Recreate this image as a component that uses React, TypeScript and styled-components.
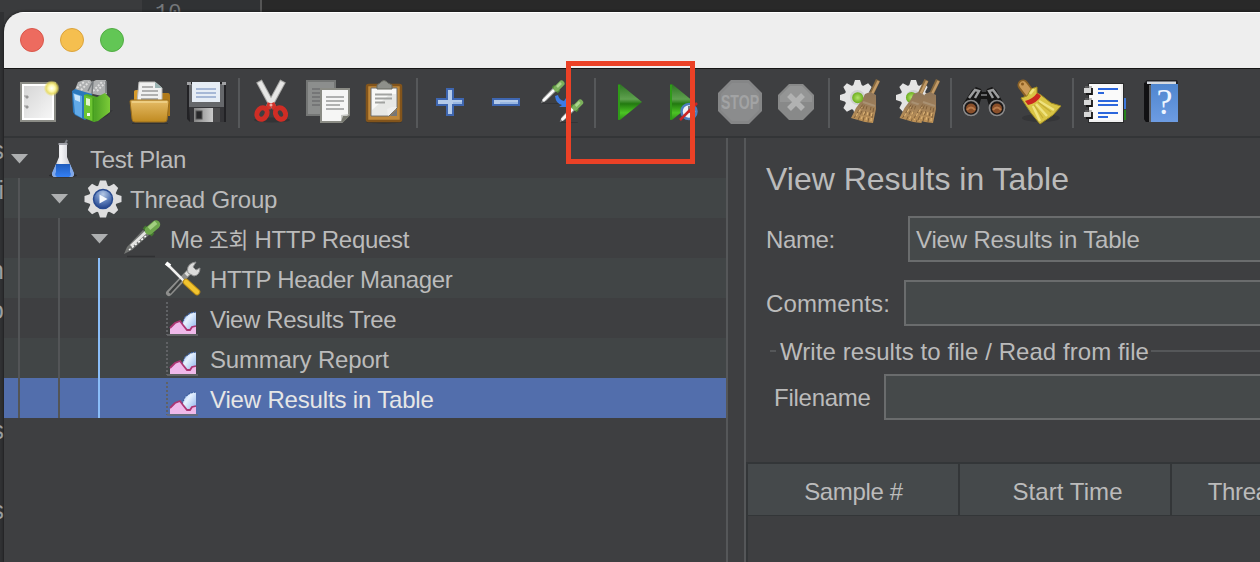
import React from "react";
import styled, { createGlobalStyle } from "styled-components";

const GlobalStyle = createGlobalStyle`
  * { box-sizing: border-box; }
  body {
    margin: 0;
    overflow: hidden;
    background: #2a2a2a;
    font-family: "Liberation Sans", "Noto Sans CJK KR", sans-serif;
    color: #bbbbbb;
  }
  svg { display: block; }
`;

const Desktop = styled.div`
  position: relative;
  display: grid;
  grid-template: 12px 550px / 4px 1256px;
  width: 1260px;
  height: 562px;
  overflow: hidden;
  background: linear-gradient(90deg, #38393b 0, #38393b 142px, #292929 142px);
`;

const EditorStrip = styled.div`
  grid-column: 1 / 3;
  display: flex;
  height: 32px;
  background: #292929;
`;

const EditorPane = styled.div`
  width: 142px;
  background: #3a3b3d;
`;

const EditorGutter = styled.div`
  width: 120px;
  padding: 2px 0 0 13px;
  border-right: 2px solid #555555;
  background: #303234;
  color: #75787b;
  font: 22px/24px "Liberation Mono", monospace;
`;

const EditorEdge = styled.div`
  grid-row: 2;
  display: flex;
  flex-direction: column;
  padding-top: 118px;
  overflow: hidden;
  background: #303133;
`;

const EdgeGlyph = styled.div`
  display: flex;
  justify-content: flex-end;
  flex: 0 0 40px;
  width: 4px;
  color: #a2a3a4;
  font-size: 25px;
  line-height: 40px;
`;

const Window = styled.div`
  grid-row: 2;
  grid-column: 2;
  z-index: 1;
  display: flex;
  flex-direction: column;
  overflow: hidden;
  border-top-left-radius: 20px;
  background: #3e3f41;
  box-shadow: 0 0 3px #111111;
`;

const TitleBar = styled.div`
  display: flex;
  flex: 0 0 57px;
  gap: 16px;
  padding: 15px 16px 16px;
  border-top: 1px solid #ffffff;
  border-bottom: 1px solid #151515;
  background: #eeeeee;
`;

const Light = styled.div<{ $fill: string; $edge: string }>`
  width: 24px;
  height: 24px;
  border: 1px solid ${(p) => p.$edge};
  border-radius: 50%;
  background: ${(p) => p.$fill};
`;

const Toolbar = styled.div`
  display: flex;
  flex: 0 0 69px;
  padding: 9px 6px 0;
  border-bottom: 2px solid #333537;
`;

const ToolButton = styled.div`
  display: flex;
  justify-content: center;
  width: 56px;
`;

const ToolSeparator = styled.div`
  width: 2px;
  height: 50px;
  margin: 0 4px;
  background: #56585a;
`;

const Content = styled.div`
  display: flex;
  flex: 1;
  min-height: 0;
`;

const TreePane = styled.div`
  width: 724px;
  border-right: 2px solid #555759;
`;

const TreeRow = styled.div<{ $tone: string; $selected?: boolean }>`
  display: flex;
  height: 40px;
  background: ${(p) => p.$tone};
  color: ${(p) => (p.$selected ? "#e6e6e6" : "#bbbbbb")};
`;

const Indent = styled.div<{ $active: boolean }>`
  width: 40px;
  padding-left: 14px;
  &::before {
    content: "";
    display: block;
    width: 2px;
    height: 40px;
    background: ${(p) => (p.$active ? "#8abdf8" : "#535557")};
  }
`;

const Toggle = styled.div`
  width: 39px;
  padding: 16px 0 0 7px;
`;

const TreeLabel = styled.div<{ $track: number }>`
  padding: 3px 0 0 7px;
  font-size: 24px;
  line-height: 37px;
  letter-spacing: ${(p) => p.$track}px;
  white-space: pre;
`;

const Hangul = styled.span`
  font-size: 21.5px;
`;

const Splitter = styled.div`
  width: 18px;
  border-right: 2px solid #555759;
`;

const DetailPane = styled.div`
  display: flex;
  flex-direction: column;
  flex: 1;
  min-width: 0;
  overflow: hidden;
`;

const Heading = styled.h1`
  height: 78px;
  margin: 0;
  padding: 22px 0 0 20px;
  font-size: 32px;
  font-weight: 400;
  line-height: 38px;
  white-space: nowrap;
`;

const FormRow = styled.div<{ $indent: number; $after: number }>`
  display: flex;
  height: 46px;
  margin-bottom: ${(p) => p.$after}px;
  padding-left: ${(p) => p.$indent}px;
`;

const FieldLabel = styled.label<{ $width: number; $track?: number }>`
  width: ${(p) => p.$width}px;
  padding-top: 1px;
  font-size: 24px;
  line-height: 45px;
  letter-spacing: ${(p) => p.$track ?? 0}px;
  white-space: nowrap;
`;

const Field = styled.div`
  flex: 1;
  padding: 0 0 0 6px;
  border: 2px solid #6a6c6d;
  border-right: 0;
  background: #45494a;
  font-size: 24px;
  line-height: 43px;
  letter-spacing: -0.17px;
  white-space: nowrap;
`;

const GroupTitle = styled.div`
  display: flex;
  align-items: center;
  gap: 4px;
  height: 28px;
  margin-bottom: 8px;
  padding-left: 24px;
  font-size: 24px;
  line-height: 28px;
  letter-spacing: 0.07px;
  white-space: nowrap;
  &::before, &::after {
    content: "";
    height: 2px;
    width: 6px;
    margin-bottom: 2px;
    background: #555759;
  }
  &::after { flex: 1; margin-left: -2px; }
`;

const Table = styled.div`
  flex: 1;
  border-left: 2px solid #333638;
  margin-top: 42px;
`;

const TableHead = styled.div`
  display: grid;
  grid-template-columns: repeat(3, 212px);
  height: 54px;
  border: 2px solid #333638;
  border-width: 2px 0;
`;

const HeadCell = styled.div<{ $shift: number; $track: number }>`
  padding: 4px 0 0 ${(p) => p.$shift}px;
  border-right: 2px solid #333638;
  background: #45494b;
  font-size: 24px;
  line-height: 47px;
  letter-spacing: ${(p) => p.$track}px;
  text-align: center;
  white-space: nowrap;
`;

const Highlight = styled.div`
  position: absolute;
  z-index: 2;
  left: 566px;
  top: 61px;
  width: 129px;
  height: 103px;
  border: 5px solid #eb4126;
`;

const Icon48 = ({ children }: { children: React.ReactNode }) => (
  <svg width="48" height="48" viewBox="0 0 48 48">{children}</svg>
);

const Defs = styled.svg`
  position: absolute;
`;

const Gradients = () => (
  <Defs width="0" height="0">
    <defs>
      <linearGradient id="paper" x1="0" y1="0" x2="1" y2="1"><stop stopColor="#d6d6d6" /><stop offset="1" stopColor="#f6f6f6" /></linearGradient>
      <linearGradient id="gold" x1="0" y1="0" x2="0" y2="1"><stop stopColor="#e6bd68" /><stop offset="1" stopColor="#c08a20" /></linearGradient>
      <linearGradient id="play" x1="0" y1="0" x2="0" y2="1"><stop stopColor="#2d7422" /><stop offset=".42" stopColor="#5fa14f" /><stop offset=".55" stopColor="#227a10" /><stop offset=".8" stopColor="#4cc424" /><stop offset="1" stopColor="#2c8e16" /></linearGradient>
      <linearGradient id="leaf" x1="0" y1="0" x2="1" y2="0"><stop stopColor="#55b526" /><stop offset=".45" stopColor="#4fa526" /><stop offset="1" stopColor="#7ccb38" /></linearGradient>
      <linearGradient id="steel" x1="0" y1="0" x2="1" y2="0"><stop stopColor="#858585" /><stop offset="1" stopColor="#e4e4e4" /></linearGradient>
      <linearGradient id="book" x1="0" y1="0" x2="0" y2="1"><stop stopColor="#4f86cf" /><stop offset="1" stopColor="#6d9ce2" /></linearGradient>
      <linearGradient id="straw" x1="0" y1="0" x2="0" y2="1"><stop stopColor="#8f765b" /><stop offset=".4" stopColor="#9b7c58" /><stop offset="1" stopColor="#c09355" /></linearGradient>
      <linearGradient id="ice" x1="0" y1="0" x2="1" y2="1"><stop stopColor="#8bb4f0" /><stop offset=".4" stopColor="#e7f2ff" /><stop offset="1" stopColor="#7fa9e8" /></linearGradient>
      <linearGradient id="liquid" x1="0" y1="0" x2="0" y2="1"><stop stopColor="#1f5cbd" /><stop offset="1" stopColor="#3480f5" /></linearGradient>
      <linearGradient id="glass" x1="0" y1="0" x2="1" y2="0"><stop stopColor="#b2b3bd" /><stop offset=".4" stopColor="#f6f6f8" /><stop offset="1" stopColor="#bcbcc6" /></linearGradient>
      <radialGradient id="bead"><stop stopColor="#b5e36a" /><stop offset="1" stopColor="#6cae1e" /></radialGradient>
      <radialGradient id="glow"><stop stopColor="#ffffff" /><stop offset=".4" stopColor="#fdf9b0" /><stop offset=".7" stopColor="#e9dc60" stopOpacity=".9" /><stop offset="1" stopColor="#e9dc60" stopOpacity="0" /></radialGradient>
      <radialGradient id="hub" cx=".5" cy=".25" r=".8"><stop stopColor="#b5c8e4" /><stop offset=".5" stopColor="#5c7dba" /><stop offset="1" stopColor="#1c3c85" /></radialGradient>
    </defs>
  </Defs>
);

const NewIcon = () => (
  <Icon48>
    <rect x="6" y="4" width="36" height="40" fill="#8b8c86" />
    <rect x="8" y="6" width="32" height="36" fill="#fff" />
    <rect x="10" y="8" width="28" height="32" fill="url(#paper)" />
    <path d="M10 18h2v2h2v-2h-2M10 28h2v2h2v-2h-2" fill="#888" stroke="#999" strokeWidth="1" />
    <circle cx="37.7" cy="10.3" r="8" fill="url(#glow)" />
  </Icon48>
);

const TemplatesIcon = () => (
  <Icon48>
    <path d="M34 34l9-2-6 6-12 6z" fill="#333436" />
    <path d="M4 14L8 4l6-2h6l2 2 4-2h10l1 14-5 2-9-2-8 3z" fill="#aeb0b1" />
    <path d="M7 10l8-7M11 12l8-8M23 13l9-9M27 13l8-8" stroke="#dedede" strokeWidth="2" strokeDasharray="2 1.5" />
    <path d="M18 13l5-10-1 13M36 3v12" stroke="#777b7e" strokeWidth="1.5" fill="none" />
    <path d="M2 13l3-2 10 3 7 2v22l-7 4-10-5-2-3z" fill="#2b78bc" />
    <path d="M3 15l9 3v22l-7-4z" fill="#62aae8" /><path d="M4 16l6 2v6l-5-2z" fill="#c7e4fa" />
    <path d="M14 17l3-1 10 3 8-4 5 5v14l-12 9-4 1-10-4z" fill="url(#leaf)" />
    <path d="M14 17l9 3v23l-9-3z" fill="#6cc431" /><path d="M16 20l4 1v7l-4-1z" fill="#e0f5cc" />
    <path d="M23 20v23" stroke="#3d9418" /><rect x="17" y="35" width="3" height="3" fill="#f0f7ee" />
  </Icon48>
);

const OpenIcon = () => (
  <Icon48>
    <path d="M6 45h36v1H6z" fill="#303132" />
    <path d="M8 14q0-2 3-2h8l3 3h20q2 0 2 3v20H8z" fill="#b07a1b" />
    <path d="M8 14q0-2 3-2h6v12H8z" fill="#d69a2c" />
    <path d="M13 4h16l7 6v14H11z" fill="#f0f0f0" stroke="#b8b8b6" />
    <path d="M29 4v6h7z" fill="#9ab4b4" />
    <path d="M16 9h11M16 13h16M15 17h17M15 21h17" stroke="#9a9a9a" strokeWidth="1.6" />
    <path d="M4 23q0-1 2-1h35q2 0 2 2l-2 18q0 2-3 2H9q-3 0-3-3z" fill="url(#gold)" stroke="#9b6e1a" />
    <path d="M6 24h35" stroke="#f0d48c" strokeWidth="1.5" />
  </Icon48>
);

const SaveIcon = () => (
  <Icon48>
    <path d="M5 4h39v40H8l-3-3z" fill="#222225" /><path d="M7 6h35v23H7z" fill="#66686b" />
    <path d="M5 4h4v3H5zM40 4h4v3h-4z" fill="#a1a2a4" />
    <rect x="10" y="4" width="28" height="20" fill="#e6edf5" />
    <path d="M14 11h20M14 15h20M14 19h20" stroke="#a6b8d6" strokeWidth="2" />
    <path d="M7 29h35v15H8z" fill="#353538" />
    <rect x="12" y="30" width="26" height="14" fill="url(#steel)" /><rect x="31" y="30" width="7" height="14" fill="#4b4b4d" />
    <rect x="14" y="33" width="6" height="8" fill="#28282a" stroke="#555" />
  </Icon48>
);

const CutIcon = () => (
  <Icon48>
    <ellipse cx="24" cy="42" rx="18" ry="2.5" fill="#333436" />
    <path d="M11 3l14 26M35 3L21 29" stroke="#a9a9a7" strokeWidth="6.5" />
    <path d="M11.5 4L24 27M34.5 4L22 27" stroke="#e6e6e5" strokeWidth="4.500" />
    <path d="M22 25l-2 6M24 25l3 6" stroke="#d3332a" strokeWidth="5" />
    <ellipse cx="14" cy="35.5" rx="4.8" ry="6" transform="rotate(28 14 35.5)" fill="none" stroke="#cf2d25" strokeWidth="5" />
    <ellipse cx="32.5" cy="35.5" rx="4.8" ry="6" transform="rotate(-28 32.5 35.5)" fill="none" stroke="#cf2d25" strokeWidth="5" />
    <circle cx="23" cy="27" r="1.5" fill="#f0b0a8" />
  </Icon48>
);

const CopyIcon = () => (
  <Icon48>
    <path d="M3 3h28v34H3z" fill="#8c8e8d" stroke="#747675" strokeWidth="2" />
    <path d="M8 11h18M8 15h18M8 19h10M8 23h10M8 27h8" stroke="#6d6f70" strokeWidth="1.6" />
    <path d="M17 11h28v26l-7 7H17z" fill="#f6f6f5" stroke="#8a8b84" strokeWidth="2" />
    <path d="M22 19h18M22 23h18M22 27h14M22 31h18" stroke="#b0b1b0" strokeWidth="2" />
    <path d="M45 36l-8 8v-7z" fill="#c7c8c5" /><path d="M45 38l-6 6h-2l2-6z" fill="#77786f" />
  </Icon48>
);

const PasteIcon = () => (
  <Icon48>
    <ellipse cx="24" cy="44" rx="18" ry="1.5" fill="#303030" />
    <rect x="7" y="7" width="34" height="36" rx="1.5" fill="#c0883a" stroke="#82541b" strokeWidth="2.5" />
    <path d="M11 10h26v20l-8 8H11z" fill="#f8f8f7" stroke="#6d6d6b" />
    <path d="M12 32l18-16h6v15l-7 6H12z" fill="#dcdddb" opacity=".6" />
    <path d="M15 16.500h17M15 20.500h17M15 24.500h10" stroke="#a2a3a1" strokeWidth="2" />
    <path d="M37 29l-9 9-1-7 5-2z" fill="#efefee" /><path d="M37 31l-7 7h7z" fill="#777" />
    <path d="M17 11V7l3-2q4-5 8 0l4 2v4z" fill="#8e908a" stroke="#66685f" />
  </Icon48>
);

const PlusIcon = () => (
  <Icon48><path d="M21 11h6v10h10v6H27v10h-6V27H11v-6h10z" fill="#b4cae8" stroke="#3e66b0" strokeWidth="2" /><path d="M27 25h9" stroke="#9ab8e2" strokeWidth="2" /></Icon48>
);

const MinusIcon = () => (
  <Icon48><rect x="11" y="21" width="26" height="6" fill="#b4cae8" stroke="#3e66b0" strokeWidth="2" /><path d="M18 25h18" stroke="#98b7e2" strokeWidth="2" /></Icon48>
);

const SmallDropper = () => (
  <g>
    <path d="M4 25.500h17" stroke="#333436" strokeWidth="1.2" />
    <path d="M3 25l2-5L16 8.500l3.500 3.500L8 23z" fill="#8f908f" />
    <path d="M5 23L18 10" stroke="#fafafa" strokeWidth="2.6" />
    <path d="M15 8l6 6" stroke="#4d8235" strokeWidth="3.500" />
    <path d="M18.500 10.500l5-5" stroke="#7bb05b" strokeWidth="6" strokeLinecap="round" />
    <path d="M19 9l4-4" stroke="#add58f" strokeWidth="2.5" />
  </g>
);

const SwapIcon = () => (
  <Icon48>
    <SmallDropper />
    <path d="M17 18q1 8 7 9l-3 2h8l-1-9-2 3q-5-1-6-6z" fill="#3b7be6" />
    <g transform="translate(18.700 19)"><SmallDropper /></g>
  </Icon48>
);

const PlayIcon = () => (
  <Icon48><path d="M14 6h2l22 18L16 42h-2z" fill="url(#play)" /><path d="M15 7v34" stroke="#2f9b18" strokeWidth="2" /></Icon48>
);

const PlayNowIcon = () => (
  <Icon48>
    <path d="M10 6h2l22 18L12 42h-2z" fill="url(#play)" /><path d="M11 7v34" stroke="#2f9b18" strokeWidth="2" />
    <circle cx="29" cy="33.500" r="7.500" fill="#f0f2f6" stroke="#4c7dbd" strokeWidth="2.500" />
    <path d="M29 28v6h4" fill="none" stroke="#555" strokeWidth="1.500" />
    <path d="M20 42l17-17" stroke="#ca2626" strokeWidth="2.500" />
  </Icon48>
);

const StopIcon = () => (
  <Icon48>
    <path d="M15 2h18l13 13v18L33 46H15L2 33V15z" fill="#858687" />
    <path d="M16 5h16l11 11v16L32 43H16L5 32V16z" fill="#8b8c8d" />
    <text x="5" y="31" fontFamily="Liberation Sans" fontWeight="700" fontSize="20" textLength="38" lengthAdjust="spacingAndGlyphs" fill="#a2a3a4">STOP</text>
  </Icon48>
);

const ShutdownIcon = () => (
  <Icon48>
    <path d="M17 6h14l11 11v14L31 42H17L6 31V17z" fill="#888989" /><path d="M18 8h12l10 10v6H8v-6z" fill="#949595" />
    <path d="M17 17l14 14M31 17L17 31" stroke="#b1b2b2" strokeWidth="5.500" />
  </Icon48>
);

const Teeth = ({ cx, cy, r, w, fill }: { cx: number; cy: number; r: number; w: number; fill: string }) => (
  <g fill={fill}>
    {Array.from({ length: 8 }, (_, i) => (
      <path key={i} transform={`rotate(${i * 45} ${cx} ${cy})`} d={`M${cx - w} ${cy - r + 6}L${cx - w + 2} ${cy - r}h${2 * w - 4}L${cx + w} ${cy - r + 6}z`} />
    ))}
    <circle cx={cx} cy={cy} r={r - 4.5} />
  </g>
);

const Broom = ({ x }: { x: number }) => (
  <g transform={`translate(${x} 0)`}>
    <path d="M40 2L32 19" stroke="#86693f" strokeWidth="4.500" /><path d="M40.500 3L33 18" stroke="#c19a67" strokeWidth="2.500" />
    <path d="M27 16l5-2 6 3v14l-3 14-8-1-14-4 5-10 6-8z" fill="url(#straw)" />
    <path d="M16 40l9-14M20 42l7-16M25 43l4-15M30 44l3-15M34 40l2-12" stroke="#80603a" strokeWidth="1" strokeDasharray="4 2" />
    <path d="M18 38l6-9M23 41l4-8M28 42l2-8M33 43l1-10" stroke="#dcb273" strokeWidth="1.200" strokeDasharray="3 2" />
    <path d="M25 24l12 4" stroke="#a99172" strokeWidth="2" />
  </g>
);

const ClearIcon = () => (
  <Icon48><Teeth cx={19.5} cy={19.5} r={17.5} w={4.5} fill="#e4e4e4" /><circle cx="19.500" cy="19.500" r="7.500" fill="#cecfcf" /><Broom x={0} /><circle cx="19.700" cy="19.700" r="5.500" fill="url(#bead)" /></Icon48>
);

const ClearAllIcon = () => (
  <Icon48><Teeth cx={19.5} cy={19.5} r={17.5} w={4.5} fill="#e4e4e4" /><circle cx="19.500" cy="19.500" r="7.500" fill="#cecfcf" /><circle cx="17.500" cy="19.500" r="5.500" fill="url(#bead)" /><Broom x={-7.5} /><Broom x={4} /></Icon48>
);

const SearchIcon = () => (
  <Icon48>
    <path d="M12 12l4-3 5 2 1 3h4l1-3 5-2 4 3 8 14q4 9-5 11-9 1-10-9l-2-7h-6l-2 7q-1 10-10 9-9-2-6-11z" fill="#161616" />
    <path d="M9 20l6-8 4 1-4 7M39 20l-6-8-4 1 4 7" fill="none" stroke="#9b9c9d" strokeWidth="2.500" /><path d="M21 17h6" stroke="#67686a" strokeWidth="2" />
    <circle cx="11" cy="30" r="7.500" fill="#1b1818" stroke="#89898a" strokeWidth="1.700" /><circle cx="37" cy="30" r="7.500" fill="#1b1818" stroke="#89898a" strokeWidth="1.700" />
    <circle cx="11" cy="30.500" r="5" fill="#8a4f2a" /><circle cx="37" cy="30.500" r="5" fill="#8a4f2a" />
    <path d="M7 32q4-5 8 0M33 32q4-5 8 0" stroke="#b97b4b" strokeWidth="2" fill="none" />
  </Icon48>
);

const ResetIcon = () => (
  <Icon48>
    <ellipse cx="25" cy="40" rx="19" ry="4" fill="#353638" />
    <path d="M7 7l8 11" stroke="#8a6126" strokeWidth="11" strokeLinecap="round" /><path d="M7 7l7 9" stroke="#cb9a56" strokeWidth="7.500" strokeLinecap="round" /><circle cx="6.500" cy="6" r="1.500" fill="#8b5c20" />
    <path d="M5 20l6-2 4-7 6-2v6l4 2 10 8 10 3-8 9-13 9-9-11-6-9z" fill="#d9c445" stroke="#a08c22" />
    <path d="M17 28l7 15M20 26l11 12M23 23l15 9M14 16l4-5" stroke="#efe27e" strokeWidth="2.500" />
    <path d="M18 27l9 13M22 24l13 10" stroke="#c5ad35" strokeWidth="1.200" />
    <path d="M9 23q8-2 12-8l4 3q-4 7-13 9z" fill="#cb2920" />
  </Icon48>
);

const LogIcon = () => (
  <Icon48>
    <rect x="40" y="20" width="4" height="11" fill="#3c78db" /><rect x="40" y="32" width="4" height="10" fill="#24831a" />
    <rect x="6" y="5" width="36" height="40" fill="#292a2b" /><rect x="7" y="6" width="34" height="38" fill="#f0f0f0" /><rect x="8" y="6" width="31" height="36" fill="#fafafa" />
    <path d="M16 11h20M16 23h20M16 27h20M16 35h20" stroke="#2b66dc" strokeWidth="1.800" /><path d="M16 15h6M16 39h10" stroke="#2b66dc" strokeWidth="1.800" />
    <path d="M2 10h8v5H2zM2 22h8v5H2zM2 34h8v5H2z" fill="#d7d8d8" /><path d="M10 10v6H4M10 22v6H4M10 34v6H4" stroke="#151515" strokeWidth="1.800" fill="none" />
    <path d="M3 9h7M3 21h7M3 33h7" stroke="#777" />
    <path d="M42 20h2v10h-2z" fill="#3c78db" /><path d="M42 32h2v10h-2z" fill="#24831a" />
  </Icon48>
);

const HelpIcon = () => (
  <Icon48>
    <path d="M6 5l3-3h30l1 2v40H8l-2-3z" fill="#202124" /><path d="M6 5h7v39H8l-2-3z" fill="#111113" /><path d="M9 3.500h29v2.500H9z" fill="#d5d9df" />
    <rect x="13" y="6" width="27" height="38" fill="url(#book)" /><path d="M12 7v37" stroke="#77797b" strokeWidth="1.500" />
    <text x="26.500" y="36" textAnchor="middle" fontFamily="Liberation Serif" fontSize="36" fill="#eef5ff">?</text>
  </Icon48>
);

const toolGroups = [
  [NewIcon, TemplatesIcon, OpenIcon, SaveIcon],
  [CutIcon, CopyIcon, PasteIcon],
  [PlusIcon, MinusIcon, SwapIcon],
  [PlayIcon, PlayNowIcon, StopIcon, ShutdownIcon],
  [ClearIcon, ClearAllIcon],
  [SearchIcon, ResetIcon],
  [LogIcon, HelpIcon],
];

const Icon40 = ({ children }: { children: React.ReactNode }) => (
  <svg width="40" height="40" viewBox="0 0 40 40">{children}</svg>
);

const FlaskIcon = () => (
  <Icon40>
    <ellipse cx="20" cy="37.500" rx="14" ry="2" fill="#2c2d2f" />
    <path d="M16 5h8v14l7 17q0 3-3 3H12q-3 0-3-3l7-17z" fill="url(#glass)" />
    <path d="M22 6l2-4" stroke="#76797f" strokeWidth="2" /><path d="M15.500 6h9" stroke="#a2a3aa" strokeWidth="2" />
    <path d="M9 35l4-9h14l4 9q0 4-3 4H12q-3 0-3-4z" fill="#7fa8ea" /><path d="M13 26h14v8q2 3-1 5H14q-3-2-1-5z" fill="url(#liquid)" />
  </Icon40>
);

const GroupIcon = () => (
  <Icon40>
    <Teeth cx={20} cy={21} r={18.5} w={5} fill="#dededf" />
    <circle cx="20" cy="21" r="9.500" fill="url(#hub)" stroke="#294b91" strokeWidth="1.500" /><path d="M16.500 16.500L24.500 21l-8 4.500z" fill="#f5f8fc" />
  </Icon40>
);

const DropperIcon = () => (
  <Icon40>
    <path d="M4 38.500h28" stroke="#303133" strokeWidth="1.500" />
    <path d="M1 36l3-7L20 12l6 5L9 32z" fill="#747674" /><path d="M8 28l15-14" stroke="#e4e4e2" strokeWidth="3" /><path d="M6 32l17-14" stroke="#fff" strokeWidth="1.500" strokeDasharray="2 2" />
    <path d="M21 9l9 8" stroke="#44782f" strokeWidth="4" /><path d="M26 12.500l7-6" stroke="#6da64b" strokeWidth="8.500" strokeLinecap="round" /><path d="M26 10.500l7-6" stroke="#a2cf80" strokeWidth="4" />
  </Icon40>
);

const ToolsIcon = () => (
  <Icon40>
    <path d="M6 35L28 12" stroke="#8d8e8c" strokeWidth="6" strokeLinecap="round" /><path d="M6.500 35L20 20" stroke="#3b3e3e" strokeWidth="2.500" />
    <path d="M23 17l5-5" stroke="#dededc" strokeWidth="4" />
    <path d="M25 15q-2-7 4-10l4-1-3 5 3 3 4-2q0 7-6 8z" fill="#dbdbda" stroke="#8f9090" />
    <path d="M4 6l18 18" stroke="#f0f0ee" strokeWidth="2.500" /><path d="M3 5l4 3" stroke="#fff" strokeWidth="4" />
    <path d="M23 24l11 10" stroke="#b98b16" strokeWidth="6.500" strokeLinecap="round" /><path d="M23 24l11 10" stroke="#f1c42f" strokeWidth="4.500" strokeLinecap="round" />
  </Icon40>
);

const ChartIcon = () => (
  <Icon40>
    <path d="M4 4v33" stroke="#606265" strokeWidth="2" strokeDasharray="2 2" /><path d="M4 37h31" stroke="#6b6d6f" strokeWidth="1.500" />
    <path d="M18 28l4-9 6-4 5-1v18l-8 3z" fill="url(#ice)" /><path d="M19 26l3-7 5-4 6-1" stroke="#3d5f9e" fill="none" strokeWidth="1.200" strokeDasharray="2 1" />
    <path d="M7 36v-6l5-5 5-2 3 4 5 5 3-3h5v7z" fill="#efb9ea" />
    <path d="M7 30l5-5 5-2 3 4 4 5h3l2-3 4-1" stroke="#ac3673" strokeWidth="1.800" fill="none" />
  </Icon40>
);

interface TreeItem {
  label: React.ReactNode;
  depth: number;
  Icon: () => React.ReactNode;
  track: number;
  open?: boolean;
  selected?: boolean;
}

const rows: TreeItem[] = [
  { label: "Test Plan", depth: 0, Icon: FlaskIcon, open: true, track: -0.3 },
  { label: "Thread Group", depth: 1, Icon: GroupIcon, open: true, track: -0.18 },
  { label: <>Me <Hangul>조회</Hangul> HTTP Request</>, depth: 2, Icon: DropperIcon, open: true, track: -0.3 },
  { label: "HTTP Header Manager", depth: 3, Icon: ToolsIcon, track: -0.35 },
  { label: "View Results Tree", depth: 3, Icon: ChartIcon, track: -0.4 },
  { label: "Summary Report", depth: 3, Icon: ChartIcon, track: -0.18 },
  { label: "View Results in Table", depth: 3, Icon: ChartIcon, track: -0.17, selected: true },
];

const rowTone = (index: number, selected?: boolean) =>
  selected ? "#526eac" : index % 2 ? "#414546" : "#3e3f41";

export default function App() {
  return (
    <Desktop>
      <GlobalStyle />
      <Gradients />
      <EditorStrip>
        <EditorPane />
        <EditorGutter>10</EditorGutter>
      </EditorStrip>
      <EditorEdge>
        {["s", "i", "", "n", "o", "", "", "s", "", "s"].map((glyph, i) => (
          <EdgeGlyph key={i}>{glyph}</EdgeGlyph>
        ))}
      </EditorEdge>
      <Window>
        <TitleBar>
          <Light $fill="#ed6b5f" $edge="#d9574b" />
          <Light $fill="#f5bf4f" $edge="#dba33c" />
          <Light $fill="#62c655" $edge="#52ac44" />
        </TitleBar>
        <Toolbar>
          {toolGroups.map((group, g) => (
            <React.Fragment key={g}>
              {g > 0 && <ToolSeparator />}
              {group.map((ToolIcon, i) => (
                <ToolButton key={i}><ToolIcon /></ToolButton>
              ))}
            </React.Fragment>
          ))}
        </Toolbar>
        <Content>
          <TreePane>
            {rows.map(({ label, depth, Icon, open, track, selected }, index) => (
              <TreeRow key={index} $tone={rowTone(index, selected)} $selected={selected}>
                {Array.from({ length: depth }, (_, level) => (
                  <Indent key={level} $active={level === 2} />
                ))}
                <Toggle>
                  {open && (
                    <svg width="18" height="10" viewBox="0 0 18 10"><path d="M0 0h17L8.500 9.500z" fill="#adafb0" /></svg>
                  )}
                </Toggle>
                <Icon />
                <TreeLabel $track={track}>{label}</TreeLabel>
              </TreeRow>
            ))}
          </TreePane>
          <Splitter />
          <DetailPane>
            <Heading>View Results in Table</Heading>
            <FormRow $indent={20} $after={18}>
              <FieldLabel $width={142} $track={-0.4}>Name:</FieldLabel>
              <Field>View Results in Table</Field>
            </FormRow>
            <FormRow $indent={20} $after={12}>
              <FieldLabel $width={138} $track={0.15}>Comments:</FieldLabel>
              <Field />
            </FormRow>
            <GroupTitle>Write results to file / Read from file</GroupTitle>
            <FormRow $indent={28} $after={0}>
              <FieldLabel $width={110} $track={-0.25}>Filename</FieldLabel>
              <Field />
            </FormRow>
            <Table>
              <TableHead>
                <HeadCell $shift={1} $track={-0.35}>Sample #</HeadCell>
                <HeadCell $shift={5} $track={0.08}>Start Time</HeadCell>
                <HeadCell $shift={4} $track={-0.4}>Thread Name</HeadCell>
              </TableHead>
            </Table>
          </DetailPane>
        </Content>
      </Window>
      <Highlight />
    </Desktop>
  );
}
